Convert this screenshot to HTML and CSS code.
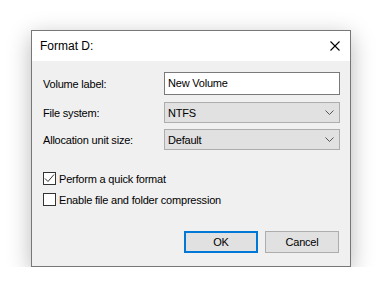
FILE: index.html
```html
<!DOCTYPE html>
<html>
<head>
    <meta charset="utf-8">
    <title>Format D:</title>
    <link rel="stylesheet" href="styles.css">
</head>
<body>
<div class="dialog">
    <div class="titlebar">
        <span class="title">Format D:</span>
        <span class="close">
            <svg width="10" height="10" viewBox="0 0 10 10"><path d="M0.5 0.5L9.5 9.5M9.5 0.5L0.5 9.5" stroke="#000" stroke-width="1.1" fill="none"/></svg>
        </span>
    </div>
    <div class="content">
        <div class="form">
            <div class="row row-input">
                <label class="label">Volume label:</label>
                <div class="field field-text">New Volume</div>
            </div>
            <div class="row row-select">
                <label class="label">File system:</label>
                <div class="field field-select">
                    <span>NTFS</span>
                    <svg class="chevron" width="9" height="5" viewBox="0 0 9 5"><path d="M0.5 0.5L4.5 4.5L8.5 0.5" stroke="#555" stroke-width="1" fill="none"/></svg>
                </div>
            </div>
            <div class="row row-select">
                <label class="label">Allocation unit size:</label>
                <div class="field field-select">
                    <span>Default</span>
                    <svg class="chevron" width="9" height="5" viewBox="0 0 9 5"><path d="M0.5 0.5L4.5 4.5L8.5 0.5" stroke="#555" stroke-width="1" fill="none"/></svg>
                </div>
            </div>
        </div>

        <div class="options">
            <div class="check">
                <span class="box">
                    <svg width="11" height="11" viewBox="0 0 11 11"><path d="M1 5.5L4 8.5L10 1.5" stroke="#333" stroke-width="1" fill="none"/></svg>
                </span>
                <span>Perform a quick format</span>
            </div>
            <div class="check">
                <span class="box"></span>
                <span>Enable file and folder compression</span>
            </div>
        </div>

        <div class="buttons">
            <div class="btn btn-default">OK</div>
            <div class="btn">Cancel</div>
        </div>
    </div>
</div>
</body>
</html>
```
FILE: styles.css
```css
* {
    box-sizing: border-box;
    margin: 0;
    padding: 0;
}

body {
    background: #fff;
    font-family: "Liberation Sans", Arial, sans-serif;
    font-size: 11px;
    letter-spacing: -0.2px;
    color: #000;
    padding: 30px 0 0 31px;
}

.dialog {
    width: 320px;
    height: 237px;
    border: 1px solid #777;
    background: #f0f0f0;
    box-shadow: 0 6px 22px rgba(0, 0, 0, 0.28);
    display: flex;
    flex-direction: column;
}

.titlebar {
    height: 30px;
    background: #fff;
    display: flex;
    align-items: center;
    justify-content: space-between;
    padding: 0 10px 0 8px;
}

.title {
    font-size: 12px;
    letter-spacing: 0;
}

.close {
    display: flex;
    width: 10px;
    height: 10px;
    margin-top: -1px;
}

.content {
    flex: 1;
    padding: 11px 10px 0 11px;
    display: flex;
    flex-direction: column;
}

.row {
    display: grid;
    grid-template-columns: 121px 176px;
    align-items: center;
}

.row-input {
    height: 23px;
    margin-bottom: 7px;
}

.row-select {
    height: 21px;
    margin-bottom: 6px;
}

.field {
    height: 100%;
    display: flex;
    align-items: center;
    padding: 0 3px;
}

.field-text {
    background: #fff;
    border: 1px solid #7a7a7a;
    padding-bottom: 2px;
}

.field-select {
    background: #e1e1e1;
    border: 1px solid #adadad;
    justify-content: space-between;
    padding-right: 5px;
}

.chevron {
    display: block;
}

.options {
    margin-top: 16px;
    display: flex;
    flex-direction: column;
    gap: 8px;
}

.check {
    display: flex;
    align-items: center;
    gap: 3px;
    height: 13px;
}

.box {
    width: 13px;
    height: 13px;
    border: 1px solid #333;
    background: #fff;
    display: flex;
    align-items: center;
    justify-content: center;
}

.buttons {
    margin-top: 25px;
    display: flex;
    justify-content: flex-end;
    gap: 7px;
    padding-right: 1px;
}

.btn {
    width: 74px;
    height: 22px;
    background: #e1e1e1;
    border: 1px solid #adadad;
    display: flex;
    align-items: center;
    justify-content: center;
}

.btn-default {
    border: 2px solid #0078d7;
}
```
